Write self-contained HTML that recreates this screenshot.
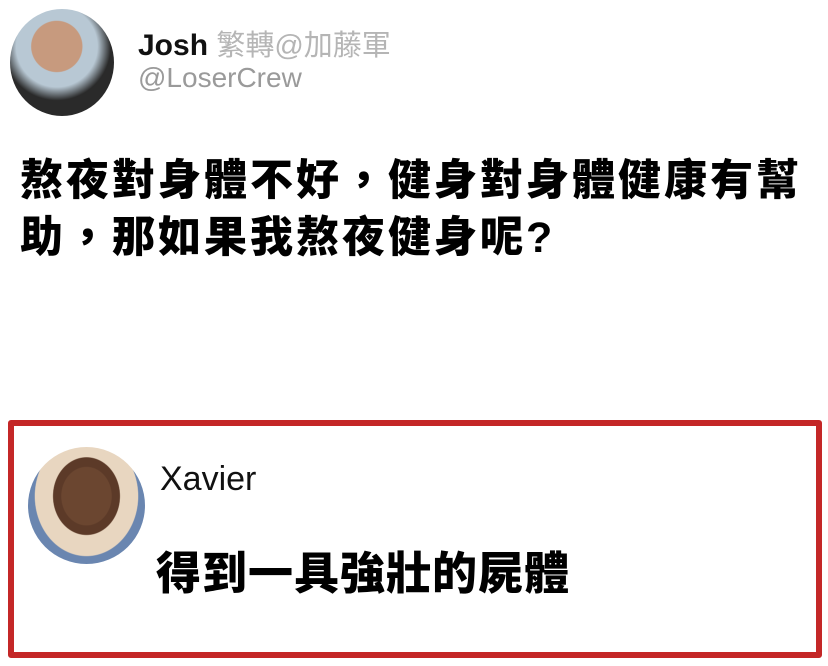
<!DOCTYPE html>
<html><head><meta charset="utf-8"><style>
body{margin:0;width:828px;height:666px;background:#fff;position:relative;overflow:hidden;font-family:"Liberation Sans","Noto Sans CJK TC",sans-serif}
.a{position:absolute}
</style></head><body>
<div class="a" style="left:10px;top:9px;width:104px;height:107px;border-radius:50%;background:radial-gradient(circle at 45% 35%,#c79a7e 0 28%,#b8c8d4 29% 45%,#2a2a2a 60%);"></div>
<div class="a" style="left:138px;top:22px;font-size:30px;font-weight:bold;color:#111">Josh <span style="color:#b5b5b5;font-weight:normal;font-size:29px">繁轉@加藤軍</span></div>
<div class="a" style="left:138px;top:62px;font-size:28px;color:#9a9a9a">@LoserCrew</div>
<div class="a" style="left:20px;top:153px;width:800px;font-size:43px;font-weight:900;line-height:57px;letter-spacing:3px;color:#000">熬夜對身體不好，健身對身體健康有幫助，那如果我熬夜健身呢?</div>
<div class="a" style="left:8px;top:420px;width:802px;height:226px;border:6px solid #c42727;border-radius:3px"></div>
<div class="a" style="left:28px;top:447px;width:117px;height:117px;border-radius:50%;background:radial-gradient(ellipse at 50% 42%,#6b4630 0 30%,#5c3a28 31% 40%,#e8d6c0 41% 62%,#6a86b0 63%);"></div>
<div class="a" style="left:160px;top:460px;font-size:34px;color:#111">Xavier</div>
<div class="a" style="left:156px;top:537px;font-size:45px;font-weight:900;color:#000;letter-spacing:1px">得到一具強壯的屍體</div>
</body></html>
